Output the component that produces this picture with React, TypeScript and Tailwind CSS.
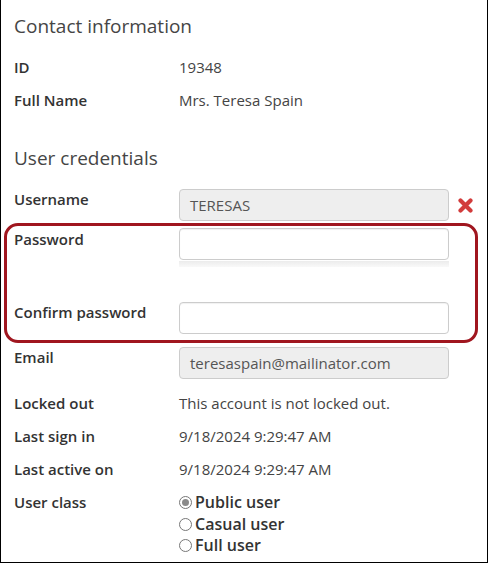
const font = { fontFamily: '"Open Sans", "Liberation Sans", sans-serif' };

function Label({ children }: { children: React.ReactNode }) {
  return <div className="text-[15px] leading-[20px] font-semibold text-[#333]">{children}</div>;
}

function InfoRow({ label, value }: { label: string; value: string }) {
  return (
    <div className="grid grid-cols-[165px_1fr]">
      <Label>{label}</Label>
      <div className="text-[15px] leading-[20px] text-[#444]">{value}</div>
    </div>
  );
}

function TextBox({ value, disabled }: { value?: string; disabled?: boolean }) {
  return (
    <div
      className={
        "h-[32px] w-[270px] rounded-[4px] border border-[#cccccc] px-[10px] text-[15px] leading-[30px] text-[#555] " +
        (disabled ? "bg-[#eeeeee]" : "bg-white shadow-[inset_0_1px_1px_rgba(0,0,0,0.06)]")
      }
    >
      {value}
    </div>
  );
}

function Radio({ label, checked }: { label: string; checked?: boolean }) {
  return (
    <div className="flex items-center gap-[3px] text-[16px] leading-[21.5px] font-semibold text-[#333]">
      <span className="flex h-[13px] w-[13px] items-center justify-center rounded-full border border-[#777] bg-white">
        {checked && <span className="h-[7px] w-[7px] rounded-full bg-[#8a8a8a]" />}
      </span>
      {label}
    </div>
  );
}

export default function App() {
  return (
    <div style={font} className="h-[563px] w-[488px] overflow-hidden border-x border-b border-black bg-white">
      <div className="px-[13px] pt-[12px]">
        <h2 className="text-[19px] leading-[28px] text-[#454545]">Contact information</h2>

        <div className="mt-[17px] flex flex-col gap-[13px]">
          <InfoRow label="ID" value="19348" />
          <InfoRow label="Full Name" value="Mrs. Teresa Spain" />
        </div>

        <h2 className="mt-[34px] text-[19px] leading-[28px] text-[#454545]">User credentials</h2>

        <div className="mt-[17px] grid grid-cols-[165px_270px_auto] items-start">
          <Label>Username</Label>
          <TextBox value="TERESAS" disabled />
          <div className="flex h-[32px] items-center pl-[9px]">
            <svg width="15" height="15" viewBox="0 0 15 15">
              <path d="M2.5 2.5 L12.5 12.5 M12.5 2.5 L2.5 12.5" stroke="#d23c3c" strokeWidth="4.2" strokeLinecap="round" />
            </svg>
          </div>
        </div>

        <div className="-ml-[10px] mr-[-4px] mt-[2px] rounded-[14px] border-[3px] border-[#a0161f] pb-[6px] pl-[7px] pt-[2px]">
          <div className="grid grid-cols-[165px_270px] items-start">
            <div className="pt-[1px]">
              <Label>Password</Label>
            </div>
            <div>
              <TextBox />
              <div className="mt-[1px] h-[6px] w-[270px] bg-gradient-to-b from-[#ececec] to-[#f9f9f9]" />
            </div>
          </div>
          <div className="mt-[35px] grid grid-cols-[165px_270px] items-start">
            <Label>Confirm password</Label>
            <TextBox />
          </div>
        </div>

        <div className="mt-[4px] grid grid-cols-[165px_270px] items-start">
          <Label>Email</Label>
          <TextBox value="teresaspain@mailinator.com" disabled />
        </div>

        <div className="mt-[14px] flex flex-col gap-[13px]">
          <InfoRow label="Locked out" value="This account is not locked out." />
          <InfoRow label="Last sign in" value="9/18/2024 9:29:47 AM" />
          <InfoRow label="Last active on" value="9/18/2024 9:29:47 AM" />
          <div className="grid grid-cols-[165px_1fr]">
            <Label>User class</Label>
            <div className="flex flex-col">
              <Radio label="Public user" checked />
              <Radio label="Casual user" />
              <Radio label="Full user" />
            </div>
          </div>
        </div>
      </div>
    </div>
  );
}
